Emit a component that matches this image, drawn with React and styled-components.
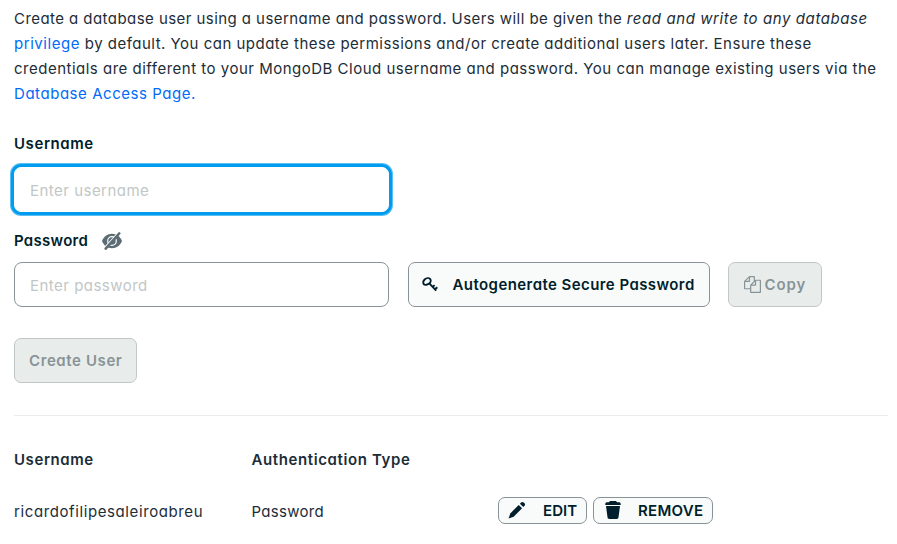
import React from "react";
import styled, { createGlobalStyle } from "styled-components";

const GlobalStyle = createGlobalStyle`
  * { box-sizing: border-box; }
  body {
    margin: 0;
    background: #fff;
    color: #1c2d38;
    font: 400 15px/25px Inter, "Open Sans", sans-serif;
    font-feature-settings: "cv11";
  }
  button, input { font: inherit; font-feature-settings: inherit; color: inherit; margin: 0; }
`;

const Page = styled.main`
  width: 897px;
  height: 544px;
  padding: 6px 9px 0 14px;
  overflow: hidden;
`;

const Intro = styled.p`
  margin: 0;
`;

const Line = styled.span`
  display: block;
  white-space: nowrap;
  letter-spacing: ${(p) => p.$track}px;
`;

const Emphasis = styled.em`
  letter-spacing: 0.586px;
`;

const Link = styled.a`
  color: #016bf8;
  text-decoration: none;
  letter-spacing: 0.55px;
`;

const Label = styled.label`
  display: flex;
  align-items: center;
  gap: 14px;
  height: 25px;
  margin-top: ${(p) => p.$top}px;
  color: #001e2b;
  font-weight: 600;
  letter-spacing: ${(p) => p.$track}px;
`;

const Input = styled.input`
  display: block;
  width: 375px;
  height: 45px;
  padding: 1px 15px 0;
  border: 1px solid #889397;
  border-radius: 8px;
  background: #fff;
  outline: none;
  letter-spacing: 0.48px;
  &::placeholder { color: #c1c7c6; opacity: 1; }
`;

const FocusedInput = styled(Input)`
  margin-top: 11px;
  padding-top: 2px;
  border-color: #fff;
  border-radius: 7px;
  box-shadow: 0 0 0 3px #019cee, 0 0 0 4px rgba(1, 156, 238, 0.65);
`;

const FieldRow = styled.div`
  display: flex;
  align-items: center;
  margin-top: 9px;
`;

const Button = styled.button`
  display: flex;
  align-items: center;
  height: 45px;
  padding: 0 0 1px;
  border: 1px solid #889397;
  border-radius: 7px;
  background: #f9fbfa;
  color: #001e2b;
  font-weight: 600;
  white-space: nowrap;
`;

const GenerateButton = styled(Button)`
  width: 302px;
  margin-left: 19px;
  padding-left: 13px;
  gap: 13.5px;
  letter-spacing: 0.43px;
`;

const DisabledButton = styled(Button)`
  border-color: #c1c7c6;
  background: #e8edeb;
  color: #889397;
`;

const CopyButton = styled(DisabledButton)`
  width: 94px;
  margin-left: 18px;
  padding-left: 15px;
  gap: 3.500px;
  letter-spacing: 0.9px;
`;

const CreateButton = styled(DisabledButton)`
  width: 123px;
  margin-top: 31px;
  padding-left: 14px;
  letter-spacing: 0.6px;
`;

const Divider = styled.hr`
  width: 874px;
  height: 1px;
  margin: 32px 0 0;
  border: 0;
  background: #e8edeb;
`;

const UserGrid = styled.div`
  display: grid;
  grid-template-columns: 237.5px 246.5px auto;
  grid-template-rows: 25px 27px;
  row-gap: 25px;
  align-items: center;
  margin-top: 31px;
`;

const Cell = styled.span`
  font-weight: ${(p) => (p.$head ? 600 : 400)};
  letter-spacing: ${(p) => p.$track}px;
  padding-top: ${(p) => (p.$head ? 0 : 1)}px;
`;

const Actions = styled.div`
  display: flex;
  gap: 6px;
`;

const ActionButton = styled(Button)`
  width: ${(p) => p.$width}px;
  height: 27px;
  padding-left: ${(p) => p.$inset}px;
  gap: ${(p) => p.$gap}px;
  letter-spacing: ${(p) => p.$track}px;
`;

const Icon = styled.svg`
  display: block;
  flex: none;
`;

const HiddenIcon = () => (
  <Icon width="20" height="18" viewBox="0 0 20 18" fill="none">
    <path d="M10 1.800C5.300 1.800 1.600 5 .2 8.500c-.1.300-.1.700 0 1 1.400 3.500 5.100 6.700 9.800 6.700s8.400-3.200 9.800-6.700c.1-.3.1-.7 0-1C18.400 5 14.700 1.800 10 1.800Z" fill="#5c6c75" />
    <circle cx="10" cy="9" r="4.300" stroke="#fff" strokeWidth="1.200" />
    <path d="M2.200 16 15.900.9" stroke="#fff" strokeWidth="1.300" />
    <path d="M3.700 16.600 17.200 1.500" stroke="#5c6c75" strokeWidth="2.600" strokeLinecap="round" />
  </Icon>
);

const KeyIcon = () => (
  <Icon width="17" height="16" viewBox="0 0 17 16" fill="none" stroke="#001e2b">
    <path d="M1.700 8.100C.9 6.600 1.400 4.600 2.900 3.300 4.500 1.900 6.900 1.700 8 2.800c1.100 1.200.8 3.300-.5 4.500C5.900 8.700 2.800 9.500 1.700 8.100Z" strokeWidth="1.900" />
    <path d="m7.300 7.300 6.900 7.400M10.700 10.900l1.900-1.800M13 13.300l2.300-2" strokeWidth="1.900" />
  </Icon>
);

const FilesIcon = () => (
  <Icon width="17" height="17" viewBox="0 0 1792 1792" fill="#889397">
    <path d="M1696 384q40 0 68 28t28 68v1216q0 40-28 68t-68 28h-960q-40 0-68-28t-28-68v-288h-544q-40 0-68-28t-28-68v-672q0-40 20-88t48-76l408-408q28-28 76-48t88-20h416q40 0 68 28t28 68v328q68-40 128-40h416zm-544 213l-299 299h299v-299zm-640-384l-299 299h299v-299zm196 647l316-316v-416h-384v416q0 40-28 68t-68 28h-416v640h512v-256q0-40 20-88t48-76zm956 804v-1152h-384v416q0 40-28 68t-68 28h-416v640h896z" />
  </Icon>
);

const PencilIcon = () => (
  <Icon width="18" height="18" viewBox="0 0 18 18" fill="#001e2b">
    <path d="m10.700 3.900 3.400 3.300-8.500 8.500L.6 17.500l1.700-5.100Z" />
    <path d="m11.900 2.700 1.200-1.200c.8-.8 1.800-.8 2.600 0l.8.8c.8.8.8 1.700 0 2.500L15.300 6Z" />
  </Icon>
);

const TrashIcon = () => (
  <Icon width="16" height="18" viewBox="0 0 16 18" fill="#001e2b">
    <path d="M4 1.300C4.300.4 5 0 6 0h4c1 0 1.700.4 2 1.300h1.800c1 0 1.900.7 1.900 1.600v1H.3v-1c0-.9.9-1.600 1.900-1.600Z" />
    <path d="M1 5h14l-1.500 11.300c-.1 1-.8 1.700-1.800 1.700H4.300c-1 0-1.700-.7-1.800-1.700Z" />
  </Icon>
);

export default function App() {
  return (
    <>
      <GlobalStyle />
      <Page>
        <Intro>
          <Line $track={0.44}>
            Create a database user using a username and password. Users will be given the{" "}
            <Emphasis>read and write to any database</Emphasis>
          </Line>
          <Line $track={0.491}>
            <Link>privilege</Link> by default. You can update these permissions and/or create
            additional users later. Ensure these
          </Line>
          <Line $track={0.5}>
            credentials are different to your MongoDB Cloud username and password. You can manage
            existing users via the
          </Line>
          <Line $track={0.5}>
            <Link>Database Access Page.</Link>
          </Line>
        </Intro>

        <Label $top={25} $track={0.58}>Username</Label>
        <FocusedInput placeholder="Enter username" />

        <Label $top={16} $track={0.28}>
          Password
          <HiddenIcon />
        </Label>
        <FieldRow>
          <Input placeholder="Enter password" />
          <GenerateButton>
            <KeyIcon />
            Autogenerate Secure Password
          </GenerateButton>
          <CopyButton>
            <FilesIcon />
            Copy
          </CopyButton>
        </FieldRow>
        <CreateButton>Create User</CreateButton>

        <Divider />

        <UserGrid>
          <Cell $head $track={0.58}>Username</Cell>
          <Cell $head $track={0.61}>Authentication Type</Cell>
          <span />
          <Cell $track={0.6}>ricardofilipesaleiroabreu</Cell>
          <Cell $track={0.28}>Password</Cell>
          <Actions>
            <ActionButton $width={89} $inset={9} $gap={17} $track={0.1}>
              <PencilIcon />
              EDIT
            </ActionButton>
            <ActionButton $width={120} $inset={11} $gap={17} $track={0.28}>
              <TrashIcon />
              REMOVE
            </ActionButton>
          </Actions>
        </UserGrid>
      </Page>
    </>
  );
}
